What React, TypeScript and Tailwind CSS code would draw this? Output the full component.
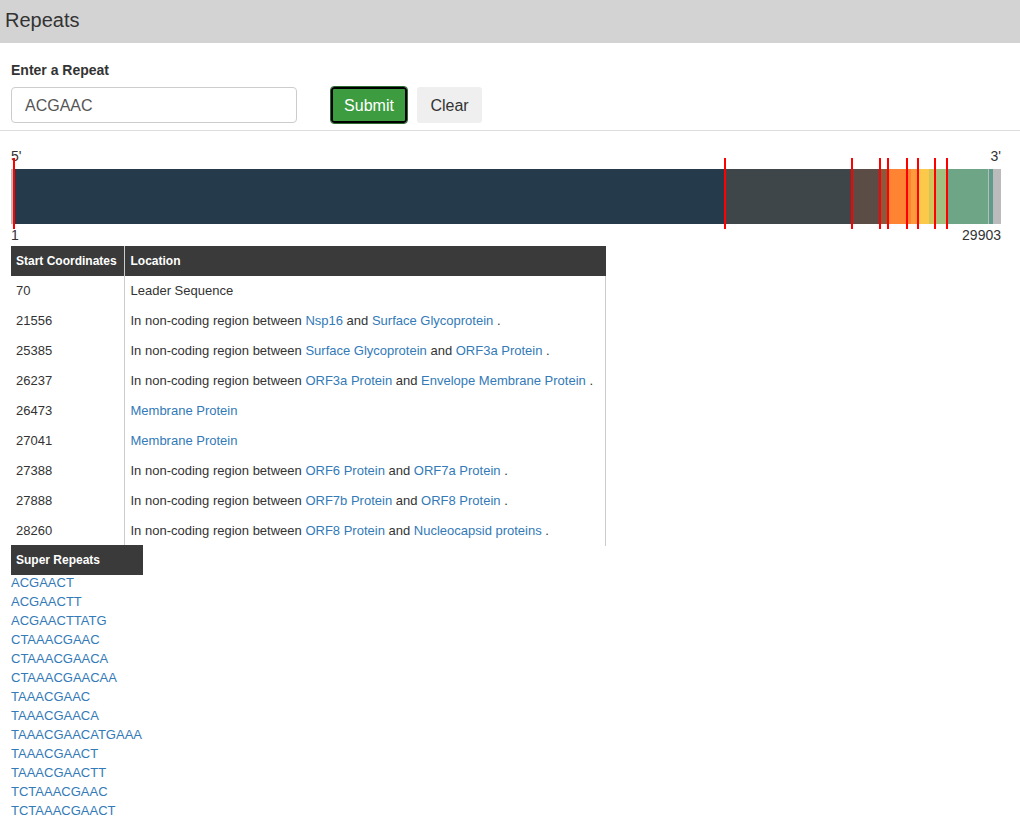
import React from "react";

const segments = [
  { w: 2, c: "bg-[#bbbbbb]" },
  { w: 712, c: "bg-[#253b4c]" },
  { w: 127, c: "bg-[#3e4649]" },
  { w: 28, c: "bg-[#5b4d45]" },
  { w: 9, c: "bg-[#8b5a3c]" },
  { w: 22, c: "bg-[#fe8333]" },
  { w: 8, c: "bg-[#fd9a3b]" },
  { w: 10, c: "bg-[#fdc94a]" },
  { w: 6, c: "bg-[#d3c35b]" },
  { w: 12, c: "bg-[#a2c180]" },
  { w: 41, c: "bg-[#6fa587]" },
  { w: 1, c: "bg-[#bbbbbb]" },
  { w: 4, c: "bg-[#5d9b8a]" },
  { w: 8, c: "bg-[#bbbbbb]" },
];

// red marker x positions, relative to the bar's left edge
const markers = [3, 714, 841, 869, 877, 896, 907, 924, 936];

type Part = string | { link: string };

const rows: { start: string; loc: Part[] }[] = [
  { start: "70", loc: ["Leader Sequence"] },
  { start: "21556", loc: ["In non-coding region between ", { link: "Nsp16" }, " and ", { link: "Surface Glycoprotein" }, " ."] },
  { start: "25385", loc: ["In non-coding region between ", { link: "Surface Glycoprotein" }, " and ", { link: "ORF3a Protein" }, " ."] },
  { start: "26237", loc: ["In non-coding region between ", { link: "ORF3a Protein" }, " and ", { link: "Envelope Membrane Protein" }, " ."] },
  { start: "26473", loc: [{ link: "Membrane Protein" }] },
  { start: "27041", loc: [{ link: "Membrane Protein" }] },
  { start: "27388", loc: ["In non-coding region between ", { link: "ORF6 Protein" }, " and ", { link: "ORF7a Protein" }, " ."] },
  { start: "27888", loc: ["In non-coding region between ", { link: "ORF7b Protein" }, " and ", { link: "ORF8 Protein" }, " ."] },
  { start: "28260", loc: ["In non-coding region between ", { link: "ORF8 Protein" }, " and ", { link: "Nucleocapsid proteins" }, " ."] },
];

const superRepeats = [
  "ACGAACT",
  "ACGAACTT",
  "ACGAACTTATG",
  "CTAAACGAAC",
  "CTAAACGAACA",
  "CTAAACGAACAA",
  "TAAACGAAC",
  "TAAACGAACA",
  "TAAACGAACATGAAA",
  "TAAACGAACT",
  "TAAACGAACTT",
  "TCTAAACGAAC",
  "TCTAAACGAACT",
];

export default function App() {
  return (
    <div className="min-h-[825px] bg-white text-[#333] font-['Liberation_Sans',Arial,sans-serif]">
      <div className="h-[43px] bg-[#d3d3d3] flex items-center px-[5px] pb-[4px]">
        <h1 className="text-[20px] text-[#333] leading-none">Repeats</h1>
      </div>

      {/* form */}
      <div className="px-[11px] pt-[19px] pb-[7px] border-b border-[#dddddd]">
        <label className="block text-[14px] font-bold leading-[16px] mb-[9px]">Enter a Repeat</label>
        <div className="flex items-center">
          <input
            defaultValue="ACGAAC"
            className="w-[286px] h-[36px] border border-[#cccccc] rounded-[4px] px-[13px] pt-[2px] text-[16px] text-[#555] outline-none"
          />
          <button className="ml-[34px] w-[76px] h-[36px] rounded-[3px] bg-[#3d9c40] text-white text-[16px] pt-[2px] border-2 border-black outline outline-1 outline-[#2e6b30]">
            Submit
          </button>
          <button className="ml-[10px] w-[65px] h-[36px] rounded-[3px] bg-[#efefef] text-[#333] text-[16px] pt-[2px]">
            Clear
          </button>
        </div>
      </div>

      {/* genome bar */}
      <div className="px-[11px] pt-[19px] w-[1012px]">
        <div className="flex justify-between text-[14px] leading-[12px] text-[#333]">
          <span>5'</span>
          <span>3'</span>
        </div>
        <div className="relative mt-[7px] flex h-[55px] w-[990px]">
          {segments.map((s, i) => (
            <div key={i} className={`h-full ${s.c}`} style={{ width: s.w }} />
          ))}
          {markers.map((x, i) => (
            <div
              key={i}
              className="absolute top-[-11px] h-[71px] w-[2px] bg-[#ff0000]"
              style={{ left: x - 1 }}
            />
          ))}
        </div>
        <div className="flex justify-between text-[14px] leading-[16px] mt-[3px] text-[#333]">
          <span>1</span>
          <span>29903</span>
        </div>
      </div>

      {/* results table */}
      <div className="px-[11px] mt-[3px]">
        <table className="w-[595px] border-collapse text-[13px] text-[#333]">
          <thead>
            <tr className="h-[30px] bg-[#3a3a3a] text-white text-left text-[12px]">
              <th className="w-[113px] px-[5px] font-bold border-r border-[#cccccc]">Start Coordinates</th>
              <th className="px-[6px] font-bold">Location</th>
            </tr>
          </thead>
          <tbody>
            {rows.map((r) => (
              <tr key={r.start} className="h-[30px]">
                <td className="px-[5px] border-r border-[#cccccc]">{r.start}</td>
                <td className="px-[6px] border-r border-[#cccccc]">
                  {r.loc.map((p, i) =>
                    typeof p === "string" ? (
                      <span key={i}>{p}</span>
                    ) : (
                      <a key={i} href="#" className="text-[#337ab7]">
                        {p.link}
                      </a>
                    )
                  )}
                </td>
              </tr>
            ))}
          </tbody>
        </table>

        <div className="-mt-[1px] w-[132px] h-[30px] bg-[#3a3a3a] text-white text-[12px] font-bold flex items-center px-[5px]">
          Super Repeats
        </div>
        <ul className="pb-[4px] -mt-[2px]">
          {superRepeats.map((s) => (
            <li key={s} className="text-[13px] leading-[19px]">
              <a href="#" className="text-[#337ab7]">
                {s}
              </a>
            </li>
          ))}
        </ul>
      </div>
    </div>
  );
}
